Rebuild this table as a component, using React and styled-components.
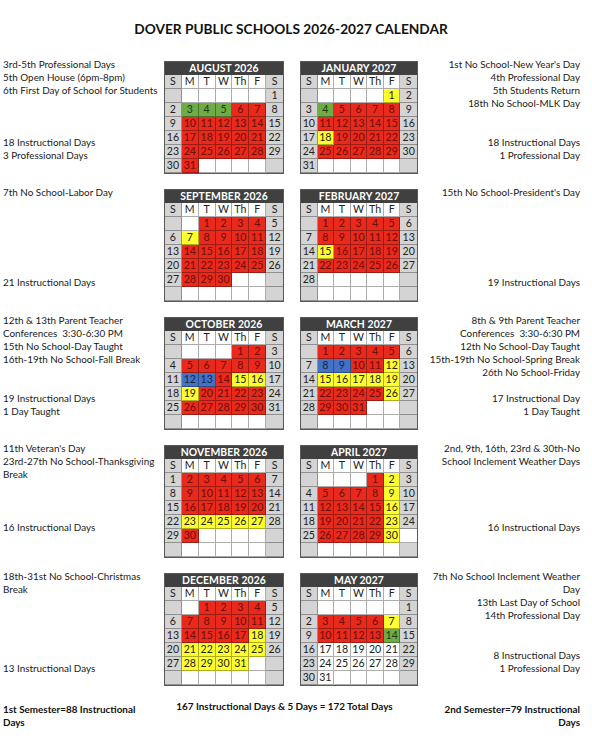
import React from 'react'
import styled, { createGlobalStyle } from 'styled-components'

const GlobalStyle = createGlobalStyle`
	body {
		margin: 0;
		background: #fff;
		font-family: Lato, "Open Sans", sans-serif;
		color: #111;}
`;

const SHADES = {
	r: '#e8291c',
	g: '#6fac46',
	y: '#ffff2e',
	b: '#4472c4',
};

const INK = {
	r: '#6b0d06',
	g: '#1d3a10',
	y: '#222',
	b: '#14264d',
};

// build { day: colourKey } from { colourKey: [day | [from, to]] }
const marks = (spec) => {
	const out = {};
	Object.entries(spec).forEach(([key, list]) => {
		list.forEach((item) => {
			if (Array.isArray(item)) {
				for (let d = item[0]; d <= item[1]; d++) out[d] = key;
			} else {
				out[item] = key;
			}
		});
	});
	return out;
};

const sections = [
	{
		left: {
			top: ['3rd-5th Professional Days', '5th Open House (6pm-8pm)', '6th First Day of School for Students'],
			bottom: ['18 Instructional Days', '3 Professional Days'],
		},
		right: {
			top: ["1st No School-New Year's Day", '4th Professional Day', '5th Students Return', '18th No School-MLK Day'],
			bottom: ['18 Instructional Days', '1 Professional Day'],
		},
		bottomGap: 12,
		months: [
			{ title: 'AUGUST 2026', start: 6, days: 31, marks: marks({ g: [[3, 5]], r: [[6, 7], [10, 14], [17, 21], [24, 28], 31] }) },
			{ title: 'JANUARY 2027', start: 5, days: 31, marks: marks({ y: [1, 18], g: [4], r: [[5, 8], [11, 15], [19, 22], [25, 29]] }) },
		],
	},
	{
		left: { top: ['7th No School-Labor Day'], bottom: ['21 Instructional Days'] },
		right: { top: ["15th No School-President's Day"], bottom: ['19 Instructional Days'] },
		bottomGap: 13,
		months: [
			{ title: 'SEPTEMBER 2026', start: 2, days: 30, marks: marks({ r: [[1, 4], [8, 11], [14, 18], [21, 25], [28, 30]], y: [7] }) },
			{ title: 'FEBRUARY 2027', start: 1, days: 28, marks: marks({ r: [[1, 5], [8, 12], [16, 19], [22, 26]], y: [15] }) },
		],
	},
	{
		left: {
			top: ['12th & 13th Parent Teacher', 'Conferences  3:30-6:30 PM', '15th No School-Day Taught', '16th-19th No School-Fall Break'],
			bottom: ['19 Instructional Days', '1 Day Taught'],
		},
		right: {
			top: ['8th & 9th Parent Teacher', 'Conferences  3:30-6:30 PM', '12th No School-Day Taught', '15th-19th No School-Spring Break', '26th No School-Friday'],
			bottom: ['17 Instructional Day', '1 Day Taught'],
		},
		bottomGap: 12,
		months: [
			{ title: 'OCTOBER 2026', start: 4, days: 31, marks: marks({ r: [[1, 2], [5, 9], 14, [20, 23], [26, 30]], b: [12, 13], y: [15, 16, 19] }) },
			{ title: 'MARCH 2027', start: 1, days: 31, marks: marks({ r: [[1, 5], 10, 11, [22, 25], [29, 31]], b: [8, 9], y: [12, [15, 19], 26] }) },
		],
	},
	{
		left: { top: ["11th Veteran's Day", '23rd-27th No School-Thanksgiving', 'Break'], bottom: ['16 Instructional Days'] },
		right: { top: ['2nd, 9th, 16th, 23rd & 30th-No', 'School Inclement Weather Days'], bottom: ['16 Instructional Days'] },
		bottomGap: 24,
		months: [
			{ title: 'NOVEMBER 2026', start: 0, days: 30, marks: marks({ r: [[2, 6], [9, 13], [16, 20], 30], y: [[23, 27]] }) },
			{ title: 'APRIL 2027', start: 4, days: 30, marks: marks({ r: [1, [5, 8], [12, 15], [19, 22], [26, 29]], y: [2, 9, 16, 23, 30] }), blank: [34] },
		],
	},
	{
		left: { top: ['18th-31st No School-Christmas', 'Break'], bottom: ['13 Instructional Days'] },
		right: {
			top: ['7th No School Inclement Weather', 'Day', '13th Last Day of School', '14th Professional Day'],
			bottom: ['8 Instructional Days', '1 Professional Day'],
		},
		bottomGap: 11,
		months: [
			{ title: 'DECEMBER 2026', start: 2, days: 31, marks: marks({ r: [[1, 4], [7, 11], [14, 17]], y: [18, [21, 25], [28, 31]] }) },
			{ title: 'MAY 2027', start: 6, days: 31, marks: marks({ r: [[3, 6], [10, 13]], y: [7], g: [14] }) },
		],
	},
];

const DAY_NAMES = ['S', 'M', 'T', 'W', 'Th', 'F', 'S'];

const Page = styled.div`
	width: 592px;
	padding-bottom: 12px;
`;

const Title = styled.h1`
	margin: 0;
	padding: 20px 10px 24px 0;
	text-align: center;
	font-size: 13.7px;
	line-height: 17px;
	font-weight: 700;
	color: #111;
`;

const Section = styled.section`
	display: grid;
	grid-template-columns: 161px auto 1fr;
	padding: 0 12px 0 3px;
	margin-bottom: 15px;

	&:last-of-type {
		margin-bottom: 0;}
`;

const Notes = styled.div`
	display: flex;
	flex-direction: column;
	justify-content: space-between;
	margin-top: -3px;
	padding-bottom: ${(p) => p.$bottomGap}px;
	text-align: ${(p) => (p.$side === 'right' ? 'right' : 'left')};
	font-size: 9.9px;
	line-height: 13px;
	white-space: pre;
	color: #1a1a1a;
`;

const Pair = styled.div`
	display: flex;
	gap: 16px;
	align-items: flex-start;
`;

const Calendar = styled.div`
	width: ${(p) => p.$width}px;
	border: 1px solid #5a5a5a;
	box-sizing: border-box;
`;

const MonthBar = styled.div`
	height: 13px;
	background: #404040;
	color: #fff;
	font-weight: 700;
	font-size: 10.4px;
	line-height: 13px;
	text-align: center;
	letter-spacing: 0.1px;
`;

const Grid = styled.div`
	display: grid;
	grid-template-columns: repeat(7, 1fr);
	grid-auto-rows: 14px;
`;

const Cell = styled.div`
	background: ${(p) => p.$bg};
	color: ${(p) => p.$ink};
	border-right: 1px solid rgba(0, 0, 0, 0.32);
	border-bottom: 1px solid rgba(0, 0, 0, 0.32);
	font-size: 10.6px;
	line-height: 13px;
	text-align: center;

	&:nth-child(7n) {
		border-right: 0;}
`;

const Footer = styled.footer`
	display: grid;
	grid-template-columns: 160px 1fr 160px;
	padding: 14px 12px 0 3px;
	font-size: 9.9px;
	line-height: 13px;
	font-weight: 700;
	color: #111;
`;

const FooterSide = styled.div`
	padding-top: 3px;
	text-align: ${(p) => p.$align};
	padding-${(p) => (p.$align === 'right' ? 'left' : 'right')}: 16px;
`;

const FooterMid = styled.div`
	text-align: center;
	padding-right: 14px;
`;

const cellsFor = (month) => {
	const list = [];
	for (let i = 0; i < 42; i++) {
		const day = i - month.start + 1;
		list.push(day >= 1 && day <= month.days ? day : null);
	}
	return list;
};

const Month = ({ month, width }) => (
	<Calendar $width={width}>
		<MonthBar>{month.title}</MonthBar>
		<Grid>
			{DAY_NAMES.map((name, i) => (
				<Cell key={`n${i}`} $bg={i % 6 === 0 ? '#d4d4d4' : '#fff'} $ink="#222">
					{name}
				</Cell>
			))}
			{cellsFor(month).map((day, i) => {
				const key = day && month.marks[day];
				const weekend = (i % 7 === 0 || i % 7 === 6) && !(month.blank || []).includes(i);
				const bg = key ? SHADES[key] : weekend ? '#d4d4d4' : '#fff';
				return (
					<Cell key={i} $bg={bg} $ink={key ? INK[key] : '#222'}>
						{day || ''}
					</Cell>
				);
			})}
		</Grid>
	</Calendar>
);

const NoteBlock = ({ side, data, bottomGap }) => (
	<Notes $side={side} $bottomGap={bottomGap}>
		<div>
			{data.top.map((line, i) => <div key={i}>{line}</div>)}
		</div>
		<div>
			{data.bottom.map((line, i) => <div key={i}>{line}</div>)}
		</div>
	</Notes>
);

const App = () => {
	return (
		<Page>
			<GlobalStyle />
			<Title>DOVER PUBLIC SCHOOLS 2026-2027 CALENDAR</Title>

			{sections.map((section, index) => (
				<Section key={index}>
					<NoteBlock side="left" data={section.left} bottomGap={section.bottomGap} />
					<Pair>
						<Month month={section.months[0]} width={120} />
						<Month month={section.months[1]} width={118} />
					</Pair>
					<NoteBlock side="right" data={section.right} bottomGap={section.bottomGap} />
				</Section>
			))}

			<Footer>
				<FooterSide $align="left">1st Semester=88 Instructional Days</FooterSide>
				<FooterMid>167 Instructional Days &amp; 5 Days = 172 Total Days</FooterMid>
				<FooterSide $align="right">2nd Semester=79 Instructional Days</FooterSide>
			</Footer>
		</Page>
	)
}

export default App
